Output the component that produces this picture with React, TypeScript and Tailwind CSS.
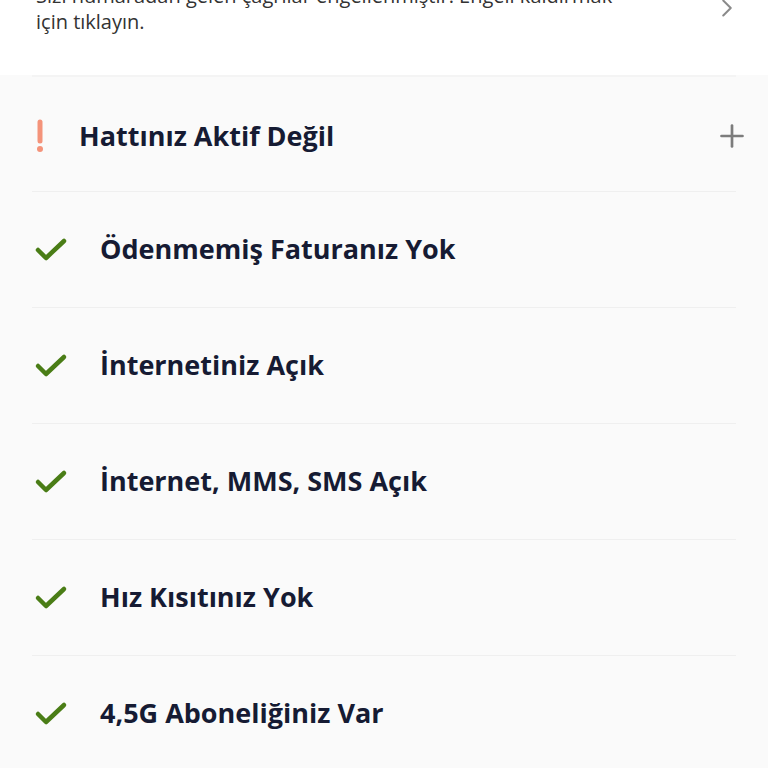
import { Plus, ChevronRight } from 'lucide-react';

const ITEMS = [
  'Ödenmemiş Faturanız Yok',
  'İnternetiniz Açık',
  'İnternet, MMS, SMS Açık',
  'Hız Kısıtınız Yok',
  '4,5G Aboneliğiniz Var',
];

function CheckMark() {
  return (
    <svg width="34" height="26" viewBox="0 0 34 26" className="ml-[2px] text-[#4a7d16]">
      <polyline
        points="4,13 12,21 30,4"
        fill="none"
        stroke="currentColor"
        strokeWidth="4.5"
        strokeLinecap="round"
        strokeLinejoin="round"
      />
    </svg>
  );
}

function StatusRow({ label }: { label: string }) {
  return (
    <div className="flex h-[116px] items-center border-t border-[#efefef]">
      <CheckMark />
      <span className="ml-[32px] text-[27px] font-bold text-[#161b33]">{label}</span>
    </div>
  );
}

export default function App() {
  return (
    <div className="h-[768px] w-[768px] overflow-hidden bg-[#fafafa] font-['Open_Sans',sans-serif]">
      <div className="h-[75px] overflow-hidden bg-white">
        <div className="-mt-[17px] flex items-start pl-[36px] pr-[26px]">
          <p className="flex-1 text-[20px] leading-[26px] text-[#333333]">
            Sizi numaradan gelen çağrılar engellenmiştir. Engeli kaldırmak
            <br />
            için tıklayın.
          </p>
          <ChevronRight className="mt-[10px] h-[30px] w-[30px] text-[#8a8a8a]" strokeWidth={1.6} />
        </div>
      </div>

      <div className="mx-[32px]">
        <div className="flex h-[116px] items-center border-t-2 border-[#f4f4f4] pt-[4px]">
          <svg width="12" height="34" viewBox="0 0 12 34" className="ml-[2px] text-[#f4937a]">
            <line x1="6" y1="3" x2="6" y2="22" stroke="currentColor" strokeWidth="5" strokeLinecap="round" />
            <circle cx="6" cy="30" r="3" fill="currentColor" />
          </svg>
          <span className="ml-[33px] text-[27px] font-bold text-[#161b33]">Hattınız Aktif Değil</span>
          <Plus className="-mr-[14px] ml-auto h-[36px] w-[36px] text-[#7c7c7c]" strokeWidth={1.8} />
        </div>
        {ITEMS.map((item) => (
          <StatusRow key={item} label={item} />
        ))}
      </div>
    </div>
  );
}
